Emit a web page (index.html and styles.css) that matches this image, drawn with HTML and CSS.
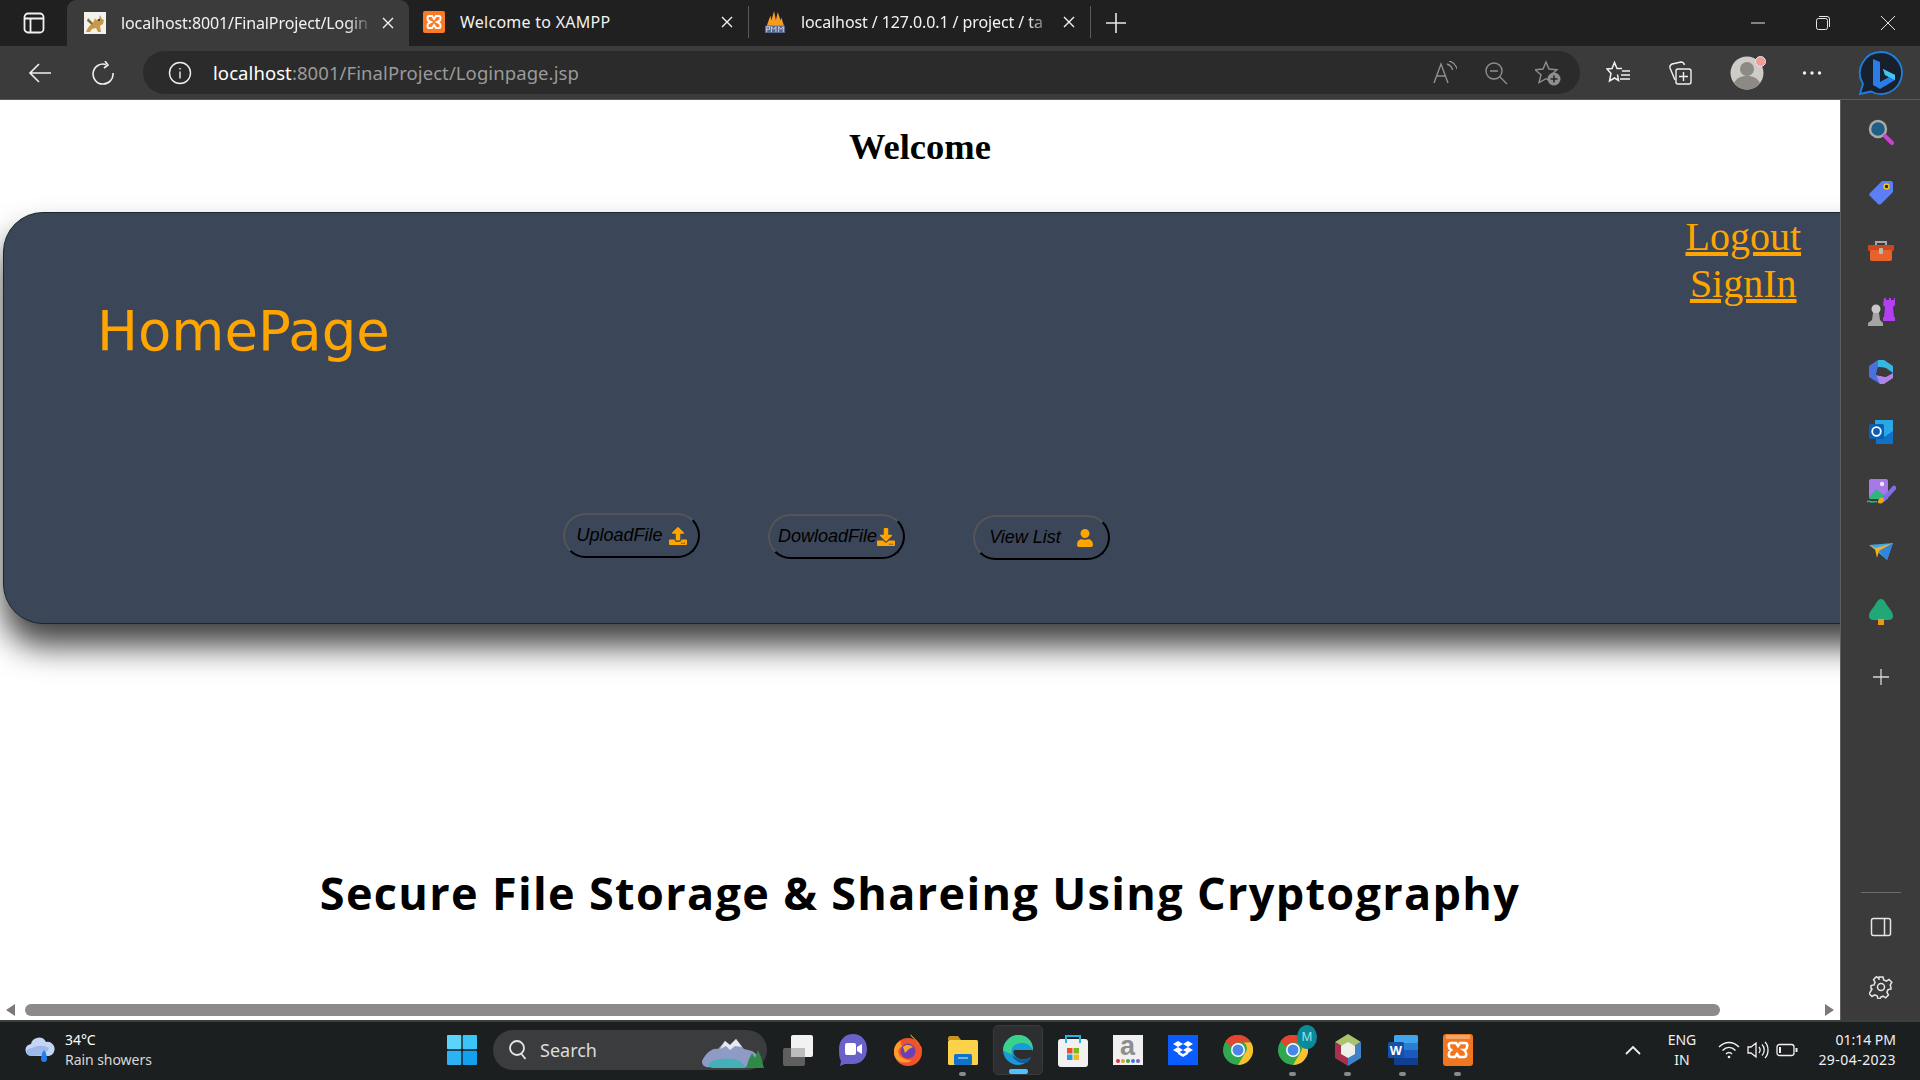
FILE: index.html
```html
<!DOCTYPE html>
<html lang="en">
<head>
<meta charset="utf-8">
<title>Loginpage</title>
<link rel="stylesheet" href="styles.css">
</head>
<body>
<div class="screen">
  <header class="tabstrip">
    <div class="tab-toggle">
      <svg width="24" height="24" viewBox="0 0 24 24" fill="none" stroke="#f2f2f2" stroke-width="1.8"><rect x="2.500" y="2.500" width="19" height="19" rx="3.500"/><path d="M2.500 7.500h19M8.500 7.500v14"/></svg>
    </div>
    <div class="tab tab-active">
      <svg class="favicon" viewBox="0 0 22 22"><rect width="22" height="22" fill="#f4f2ec"/><path d="M2 20c2-5 4-7 7-9l2-5 1 2 3-1 1-4 2 4 2 1-1 4-3 2 1 6h-3l-2-4-4 1-2 3z" fill="#c9994a"/><path d="M4 6l5 5-1 2-5-4z" fill="#8a6a30"/><circle cx="15" cy="8" r="1" fill="#222"/></svg>
      <span class="tab-title tab-title-tight">localhost:8001/FinalProject/Login</span>
      <svg class="tab-close" viewBox="0 0 14 14" stroke="#f2f2f2" stroke-width="1.4"><path d="M2 2l10 10M12 2L2 12"/></svg>
    </div>
    <div class="tab tab-xampp">
      <svg class="favicon" viewBox="0 0 22 22"><rect width="22" height="22" rx="2" fill="#fb7a24"/><path d="M6 5h3l2 3 2-3h3c2 0 2 4 0 5l-2 1 2 1c2 1 2 5 0 5h-3l-2-3-2 3H6c-2 0-2-4 0-5l2-1-2-1C4 9 4 5 6 5z" fill="none" stroke="#fff" stroke-width="2"/></svg>
      <span class="tab-title">Welcome to XAMPP</span>
      <svg class="tab-close" viewBox="0 0 14 14" stroke="#f2f2f2" stroke-width="1.4"><path d="M2 2l10 10M12 2L2 12"/></svg>
    </div>
    <div class="tab tab-pma">
      <svg class="favicon" viewBox="0 0 22 24"><path d="M2 16L6 5l1 5 3-10 2 10 2-9 3 9 1-3 3 10z" fill="#f59a23"/><rect x="0" y="16" width="22" height="8" fill="#56668f"/><path d="M2 23v-6h3v3H2M7 23v-6l2.500 3 2.500-3v6M15 23v-6l2.500 3 2.500-3v6" fill="none" stroke="#cfd5e6" stroke-width="1"/></svg>
      <span class="tab-title tab-title-tight">localhost / 127.0.0.1 / project / ta</span>
      <svg class="tab-close" viewBox="0 0 14 14" stroke="#f2f2f2" stroke-width="1.4"><path d="M2 2l10 10M12 2L2 12"/></svg>
    </div>
    <svg class="new-tab" width="22" height="22" viewBox="0 0 22 22" stroke="#e6e6e6" stroke-width="1.6"><path d="M11 1v20M1 11h20"/></svg>
    <div class="window-controls">
      <svg width="16" height="16" viewBox="0 0 16 16" stroke="#e6e6e6" stroke-width="1"><path d="M1 8h14"/></svg>
      <svg width="16" height="16" viewBox="0 0 16 16" fill="none" stroke="#e6e6e6" stroke-width="1"><rect x="1.500" y="3.500" width="11" height="11" rx="2"/><path d="M4 1.500h8a2.500 2.500 0 0 1 2.500 2.500v8"/></svg>
      <svg width="16" height="16" viewBox="0 0 16 16" stroke="#e6e6e6" stroke-width="1"><path d="M1 1l14 14M15 1L1 15"/></svg>
    </div>
  </header>

  <nav class="toolbar">
    <svg class="tool-back" width="24" height="24" viewBox="0 0 24 24" fill="none" stroke="#f0f0f0" stroke-width="1.6"><path d="M23 12H2M11 3l-9 9 9 9"/></svg>
    <svg class="tool-reload" width="24" height="24" viewBox="0 0 24 24" fill="none" stroke="#f0f0f0" stroke-width="1.6"><path d="M15 3.500A10 10 0 1 0 22 12M14 0l3 4-4 3"/></svg>
    <div class="address">
      <svg class="addr-info" width="24" height="24" viewBox="0 0 24 24" fill="none" stroke="#f0f0f0" stroke-width="1.4"><circle cx="12" cy="12" r="10.500"/><path d="M12 10.500v7M12 7v1.500"/></svg>
      <span class="url"><span class="url-host">localhost</span>:8001/FinalProject/Loginpage.jsp</span>
      <div class="addr-actions">
        <svg width="24" height="24" viewBox="0 0 24 24" fill="none" stroke="#8f8f8f" stroke-width="1.4"><path d="M1 22L8 3l7 19M3.500 15h9M14 3c3 1 5 3 5.500 6M16 0c4 1 7 4 8 8"/></svg>
        <svg width="24" height="24" viewBox="0 0 24 24" fill="none" stroke="#8f8f8f" stroke-width="1.4"><circle cx="10" cy="10" r="8"/><path d="M6 10h8M16 16l7 7"/></svg>
        <svg width="26" height="26" viewBox="0 0 26 26" fill="none" stroke="#8f8f8f" stroke-width="1.4"><path d="M11 2l3 7 8 .7-6 5 2 8-7-4-7 4 2-8-6-5 8-.7z"/><circle cx="19" cy="19" r="6.500" fill="#8f8f8f" stroke="none"/><path d="M19 15.500v7M15.500 19h7" stroke="#2b2b2b" stroke-width="1.600"/></svg>
      </div>
    </div>
    <div class="tool-actions">
      <svg width="26" height="26" viewBox="0 0 26 26" fill="none" stroke="#f0f0f0" stroke-width="1.500"><path d="M16 8.500H11L8.500 2.500 6 8.500 1 9l4 4.500L3.500 21l5-3 4 2.500-1-6M16 11h8M15 15h9M14 19h10"/></svg>
      <svg width="26" height="26" viewBox="0 0 26 26" fill="none" stroke="#f0f0f0" stroke-width="1.4"><path d="M7 20L2 8c-.5-2 0-3 2-4l9-2c2 0 3 1 3.500 3"/><rect x="8" y="9" width="15" height="15" rx="2"/><path d="M15.500 12v9M11 16.500h9"/></svg>
      <div class="avatar">
        <svg width="34" height="34" viewBox="0 0 34 34"><circle cx="17" cy="17" r="16.500" fill="#cfccc8"/><circle cx="17" cy="13" r="7" fill="#8d8985"/><path d="M4 27c3-6 8-7 13-7s10 1 13 7c-3 4-8 6.500-13 6.500S7 31 4 27z" fill="#8d8985"/></svg>
        <span class="avatar-dot"></span>
      </div>
      <svg class="tool-more" width="20" height="6" viewBox="0 0 20 6" fill="#f0f0f0"><circle cx="2.500" cy="3" r="1.700"/><circle cx="10" cy="3" r="1.700"/><circle cx="17.500" cy="3" r="1.700"/></svg>
    </div>
    <svg class="bing" width="46" height="46" viewBox="0 0 46 46"><path d="M23 2a21 21 0 1 1-10 39.500L2 44l3-10A21 21 0 0 1 23 2z" fill="#17202c" stroke="#1f7fe0" stroke-width="1.800"/><path d="M15 9l7 3v20l9-5-4-2-2-6 12 6v5l-15 9-7-4z" fill="#2a7de8"/><path d="M25 19l12 6v5l-10-5z" fill="#3ec8ee"/></svg>
  </nav>

  <div class="content">
    <main class="page">
      <h1 class="welcome">Welcome</h1>
      <section class="card">
        <div class="card-top">
          <h2 class="home-title">HomePage</h2>
          <div class="links">
            <a href="#logout">Logout</a>
            <a href="#signin">SignIn</a>
          </div>
        </div>
        <div class="actions">
          <button class="pill pill-upload" type="button">UploadFile
            <svg width="18" height="18" viewBox="0 0 512 512" fill="#ffa500"><path d="M296 384h-80c-13.300 0-24-10.700-24-24V192h-87.700c-17.800 0-26.700-21.500-14.100-34.100L242.300 5.700c7.500-7.500 19.800-7.500 27.300 0l152.200 152.200c12.600 12.600 3.700 34.100-14.100 34.100H320v168c0 13.300-10.700 24-24 24zm216-8v112c0 13.300-10.700 24-24 24H24c-13.300 0-24-10.700-24-24V376c0-13.300 10.700-24 24-24h136v8c0 30.900 25.100 56 56 56h80c30.900 0 56-25.100 56-56v-8h136c13.300 0 24 10.700 24 24zm-124 88c0-11-9-20-20-20s-20 9-20 20 9 20 20 20 20-9 20-20zm64 0c0-11-9-20-20-20s-20 9-20 20 9 20 20 20 20-9 20-20z"/></svg>
          </button>
          <button class="pill pill-download" type="button">DowloadFile
            <svg width="18" height="18" viewBox="0 0 512 512" fill="#ffa500"><path d="M216 0h80c13.300 0 24 10.700 24 24v168h87.700c17.800 0 26.700 21.500 14.100 34.100L269.700 378.300c-7.500 7.500-19.800 7.500-27.300 0L90.100 226.100c-12.600-12.600-3.700-34.100 14.100-34.100H192V24c0-13.300 10.700-24 24-24zm296 376v112c0 13.300-10.700 24-24 24H24c-13.300 0-24-10.700-24-24V376c0-13.300 10.700-24 24-24h146.700l49 49c20.100 20.100 52.500 20.100 72.600 0l49-49H488c13.300 0 24 10.700 24 24zm-124 88c0-11-9-20-20-20s-20 9-20 20 9 20 20 20 20-9 20-20zm64 0c0-11-9-20-20-20s-20 9-20 20 9 20 20 20 20-9 20-20z"/></svg>
          </button>
          <button class="pill pill-list" type="button">View List
            <svg width="18" height="18" viewBox="0 0 448 512" fill="#ffa500"><path d="M224 256c70.700 0 128-57.300 128-128S294.700 0 224 0 96 57.300 96 128s57.300 128 128 128zm89.600 32h-16.700c-22.200 10.200-46.900 16-72.900 16s-50.600-5.800-72.900-16h-16.700C60.200 288 0 348.200 0 422.400V464c0 26.500 21.500 48 48 48h352c26.500 0 48-21.500 48-48v-41.600c0-74.200-60.200-134.400-134.400-134.400z"/></svg>
          </button>
        </div>
      </section>
      <h2 class="project-title">Secure File Storage &amp; Shareing Using Cryptography</h2>
      <div class="hscroll">
        <span class="arrow-left"></span>
        <div class="hscroll-track"><div class="hscroll-thumb"></div></div>
        <span class="arrow-right"></span>
      </div>
    </main>

    <aside class="sidebar">
      <div class="side-item"><svg width="26" height="26" viewBox="0 0 26 26"><circle cx="10" cy="10" r="8" fill="#1f5f86" stroke="#a9a9a9" stroke-width="2.500"/><path d="M17 17l7 7" stroke="#d23fd6" stroke-width="4" stroke-linecap="round"/></svg></div>
      <div class="side-item"><svg width="26" height="26" viewBox="0 0 26 26"><path d="M14 2h9c1 0 2 1 2 2v9L13 25c-1 .7-2 .7-3 0L2 17c-1-1-1-2 0-3z" fill="#5b7ff5"/><circle cx="18.500" cy="7.500" r="2.500" fill="#1f2a44" stroke="#f5c518" stroke-width="1.500"/></svg></div>
      <div class="side-item"><svg width="28" height="26" viewBox="0 0 28 26"><path d="M9 7V3h10v4" fill="none" stroke="#a8a8a8" stroke-width="2"/><rect x="1" y="6" width="26" height="6" rx="1" fill="#c9481f"/><rect x="3" y="11" width="22" height="11" rx="2" fill="#e8622c"/><rect x="12" y="9" width="4" height="6" rx="1" fill="#b9b9b9"/></svg></div>
      <div class="side-item"><svg width="28" height="28" viewBox="0 0 28 28"><path d="M17 1h2v2h3V1h2v2h3V1h1v7l-2 2 1 10h1v4H16v-4h1l1-10-2-2z" fill="#b33ff0" transform="translate(0 -1)"/><circle cx="9" cy="11" r="4.500" fill="#c8c8c8"/><path d="M6 15h6l1 7 3 3v3H1v-3l4-3z" fill="#a4a4a4"/></svg></div>
      <div class="side-item"><svg width="26" height="26" viewBox="0 0 26 26"><path d="M10 1h6l9 6v7l-7-5-8-1z" fill="#38b6e0"/><path d="M1 7l9-6v7l-2 8 6 5-2 4-11-7z" fill="#4a6fe0"/><path d="M8 16l10 2 7-4v5l-9 6h-4z" fill="#b083e6"/><path d="M10 8l8 1v9l-10-2z" fill="#3b3b3b"/></svg></div>
      <div class="side-item"><svg width="26" height="26" viewBox="0 0 26 26"><rect x="7" y="1" width="18" height="18" rx="1" fill="#29a8e8"/><path d="M8 12l8 6 9-6v13H8z" fill="#0f72c6"/><rect x="1" y="5" width="15" height="15" rx="1.500" fill="#0a5fb4"/><circle cx="8.500" cy="12.500" r="4.300" fill="none" stroke="#fff" stroke-width="1.800"/></svg></div>
      <div class="side-item"><svg width="30" height="28" viewBox="0 0 30 28"><rect x="3" y="1" width="19" height="20" rx="2" fill="#a678e8"/><path d="M3 19l7-8 12 9v1H5z" fill="#2fb57e"/><circle cx="16" cy="6" r="2.200" fill="#f0e6ff"/><path d="M18 21L28 10" stroke="#7d6fe8" stroke-width="4.500" stroke-linecap="round"/><path d="M12 23c2-5 6-4 6-1s-3 4-6 3z" fill="#e8a91e"/><path d="M1 24c2-2 3 0 5 0s3-1 5 0" fill="none" stroke="#2fb57e" stroke-width="1.400"/></svg></div>
      <div class="side-item"><svg width="26" height="20" viewBox="0 0 26 20"><path d="M1 3L25 1 19 18l-8-7z" fill="#3da6ea"/><path d="M1 3l7 3 17-5-14 8-2 7-2-9z" fill="#f5b21e"/><path d="M11 9L25 1l-6 17z" fill="#2f86dc"/></svg></div>
      <div class="side-item"><svg width="26" height="28" viewBox="0 0 26 28"><path d="M13 1c3 0 4 3 6 6s6 7 6 11c0 3-2 4-5 4H6c-3 0-5-1-5-4 0-4 4-8 6-11s3-6 6-6z" fill="#22a777"/><rect x="10" y="21" width="6" height="6" fill="#e89a14"/></svg></div>
      <div class="side-item side-add"><svg width="18" height="18" viewBox="0 0 18 18" stroke="#d8d8d8" stroke-width="1.300"><path d="M9 1v16M1 9h16"/></svg></div>
      <div class="side-bottom">
        <div class="side-divider"></div>
        <div class="side-item"><svg width="22" height="20" viewBox="0 0 22 20" fill="none" stroke="#e6e6e6" stroke-width="1.500"><rect x="1.500" y="1.500" width="19" height="17" rx="2"/><path d="M14.500 2v16"/></svg></div>
        <div class="side-item"><svg width="24" height="24" viewBox="0 0 24 24" fill="none" stroke="#e6e6e6" stroke-width="1.500"><circle cx="12" cy="12" r="3.500"/><path d="M10 2h4l.7 3 2.600 1.100 2.700-1.600 2.800 2.800-1.600 2.700L22 12.600V14l-3 .7-1.100 2.600 1.600 2.700-2.800 2.800-2.700-1.600-2.600 1.100-.4 1.700h-2l-.7-3-2.600-1.100-2.700 1.600-2.800-2.800 1.600-2.700L3 14l-1-.4v-3l3-.7 1.100-2.600-1.600-2.700 2.800-2.800 2.700 1.600L10 5z"/></svg></div>
      </div>
    </aside>
  </div>

  <footer class="taskbar">
    <div class="weather">
      <svg width="32" height="32" viewBox="0 0 32 32"><path d="M8 22a6 6 0 0 1-1-12 8 8 0 0 1 15-2 7 7 0 0 1 3 14z" fill="#c4d6f5"/><path d="M8 14c6-3 12-3 17 0-2 5-6 8-17 8-3 0-5-1-6-4 1-2 3-4 6-4z" fill="#9db8ea"/><path d="M20 16c2 3 3 6 3 9a3 3 0 0 1-6 0c0-3 1-6 3-9z" fill="#1f7ff0"/></svg>
      <div class="weather-text"><span class="temp">34°C</span><span>Rain showers</span></div>
    </div>
    <svg class="start" width="30" height="30" viewBox="0 0 30 30"><rect width="14.300" height="14.300" rx="1" fill="#5cd3fb"/><rect x="15.700" width="14.300" height="14.300" rx="1" fill="#3cc3f8"/><rect y="15.700" width="14.300" height="14.300" rx="1" fill="#2db2f4"/><rect x="15.700" y="15.700" width="14.300" height="14.300" rx="1" fill="#15a0ee"/></svg>
    <div class="search">
      <svg width="20" height="22" viewBox="0 0 20 22" fill="none" stroke="#e6e6e6" stroke-width="1.800"><circle cx="9" cy="9" r="7"/><path d="M13.500 15l4 5"/></svg>
      <span class="search-label">Search</span>
      <svg class="search-art" width="66" height="36" viewBox="0 0 66 36"><path d="M2 28C6 20 12 15 18 16l7-8 5 4 6-6 8 10 8 2c8 4 8 12 4 16H12C5 35 2 33 2 28z" fill="#8f9bc4"/><path d="M25 8l5 4 6-6 6 8-7-1-5 4-4-4-6 3z" fill="#e8e8f2"/><path d="M8 31c8-6 22-7 32-3l6 7H14C10 35 8 33 8 31z" fill="#45b0b5"/><path d="M46 35l3-9 3-6 3 5 3-8 3 7 3 11z" fill="#2f8a48"/></svg>
    </div>
    <div class="task-icons">
      <div class="task-icon"><svg width="30" height="32" viewBox="0 0 30 32"><rect x="0" y="14" width="22" height="18" rx="2" fill="#5f5f5f"/><rect x="8" y="1" width="22" height="22" rx="2" fill="#f2f2f2"/><rect x="8" y="14" width="14" height="9" fill="#bdbdbd"/></svg></div>
      <div class="task-icon"><svg width="30" height="34" viewBox="0 0 30 34"><path d="M15 1c8 0 14 6 14 15s-6 15-14 15H7l-5 2 1-5C1 25 1 20 1 16 1 7 7 1 15 1z" fill="#6a61c9"/><rect x="7" y="10" width="11" height="12" rx="2" fill="#fff"/><path d="M19 14l5-3v10l-5-3z" fill="#fff"/></svg></div>
      <div class="task-icon"><svg width="30" height="34" viewBox="0 0 30 34"><circle cx="15" cy="19" r="14" fill="#f0532c"/><path d="M17 1c4 4 11 9 12 17 0-4-2-6-4-8-2-4-7-5-8-9z" fill="#ffbb2c"/><path d="M1 19C1 13 4 9 8 8c-1 3 0 4 2 5-5 2-6 6-3 10 3 3 8 5 12 4-5 5-18 3-18-8z" fill="#ff9a2c"/><circle cx="15" cy="18" r="7.500" fill="#6b3fb8"/><path d="M10 14c3-3 8-2 10 0l-4 2-4 4z" fill="#f6a62a"/></svg></div>
      <div class="task-icon task-open"><svg width="30" height="30" viewBox="0 0 30 30"><path d="M0 3c0-1 1-2 2-2h8l3 4h-13z" fill="#c9951a"/><rect y="5" width="30" height="25" rx="1.500" fill="#fbd24a"/><rect x="6" y="19" width="18" height="11" rx="1.500" fill="#1272c8"/><path d="M10 23h10" stroke="#7cc6f5" stroke-width="1.600"/></svg></div>
      <div class="task-icon task-active"><svg width="30" height="30" viewBox="0 0 30 30"><path d="M15 0c9 0 15 6 15 15H12c-3 0-2 7 5 9 4 1 8 0 11-2-3 5-8 8-13 8C7 30 0 23 0 15S7 0 15 0z" fill="#1a9ad6"/><path d="M0 15C1 6 8 0 15 0c9 0 15 6 15 15v2c0-5-5-9-11-9-8 0-12 5-10 11C4 18 1 16 0 15z" fill="#3bd18c"/><path d="M9 19c1 6 7 9 12 9 3 0 5-1 7-6-3 2-7 3-11 2-5-1-8-4-8-5z" fill="#0f5f9f"/></svg></div>
      <div class="task-icon"><svg width="30" height="34" viewBox="0 0 30 34"><rect x="0" y="6" width="30" height="28" rx="3" fill="#f1f1f1"/><path d="M8 10V3h14v7" fill="none" stroke="#25b4e8" stroke-width="2"/><rect x="9" y="15" width="5.500" height="5.500" fill="#e8502a"/><rect x="15.500" y="15" width="5.500" height="5.500" fill="#7fb81e"/><rect x="9" y="21.500" width="5.500" height="5.500" fill="#1f9ee8"/><rect x="15.500" y="21.500" width="5.500" height="5.500" fill="#f5b81e"/></svg></div>
      <div class="task-icon"><div class="amazon"><span class="amazon-a">a</span><svg width="26" height="6" viewBox="0 0 26 6"><circle cx="3" cy="3" r="2" fill="#d8323c"/><circle cx="8" cy="3" r="2" fill="#e8a01e"/><circle cx="13" cy="3" r="2" fill="#3aa655"/><circle cx="18" cy="3" r="2" fill="#3b78d8"/><circle cx="23" cy="3" r="2" fill="#8a5ac8"/></svg></div></div>
      <div class="task-icon"><svg width="30" height="30" viewBox="0 0 30 30"><rect width="30" height="30" fill="#0a5cff"/><path d="M10 6l5 3-5 3-5-3zM20 6l5 3-5 3-5-3zM10 12l5 3-5 3-5-3zM20 12l5 3-5 3-5-3zM15 19l5-3v3l-5 3-5-3v-3z" fill="#fff"/></svg></div>
      <div class="task-icon"><svg width="30" height="30" viewBox="0 0 30 30"><circle cx="15" cy="15" r="15" fill="#2fa84f"/><path d="M15 0a15 15 0 0 1 13 7.500H15a7.500 7.500 0 0 0-7 4.500L2.500 6A15 15 0 0 1 15 0z" fill="#e8432e"/><path d="M28 7.500A15 15 0 0 1 15 30l6.500-11A7.500 7.500 0 0 0 21 7.500z" fill="#fbc02d"/><circle cx="15" cy="15" r="7" fill="#fff"/><circle cx="15" cy="15" r="5.500" fill="#4a86e8"/></svg></div>
      <div class="task-icon task-open task-badged"><svg width="30" height="30" viewBox="0 0 30 30"><circle cx="15" cy="15" r="15" fill="#2fa84f"/><path d="M15 0a15 15 0 0 1 13 7.500H15a7.500 7.500 0 0 0-7 4.500L2.500 6A15 15 0 0 1 15 0z" fill="#e8432e"/><path d="M28 7.500A15 15 0 0 1 15 30l6.500-11A7.500 7.500 0 0 0 21 7.500z" fill="#fbc02d"/><circle cx="15" cy="15" r="7" fill="#fff"/><circle cx="15" cy="15" r="5.500" fill="#4a86e8"/></svg><span class="badge-m">M</span></div>
      <div class="task-icon task-open"><svg width="30" height="32" viewBox="0 0 30 32"><path d="M15 0l13 8-13 8L2 8z" fill="#a9c46c"/><path d="M2 8l13 8v16L2 24z" fill="#a8304f"/><path d="M28 8L15 16v16l13-8z" fill="#3f82c8"/><path d="M15 8l7 4v8l-7 4-7-4v-8z" fill="#eef0e8"/></svg></div>
      <div class="task-icon task-open"><svg width="30" height="30" viewBox="0 0 30 30"><rect x="6" y="0" width="24" height="30" rx="2" fill="#2b7cd3"/><rect x="6" y="0" width="24" height="8" rx="2" fill="#41a5ee"/><rect x="6" y="15" width="24" height="8" fill="#185abd"/><rect x="6" y="23" width="24" height="7" fill="#103f91"/><rect x="0" y="7" width="16" height="16" rx="1.500" fill="#1550a8"/><text class="word-w" x="8" y="20" text-anchor="middle">W</text></svg></div>
      <div class="task-icon task-open"><svg width="30" height="32" viewBox="0 0 30 32"><rect width="30" height="32" rx="3" fill="#f0761f"/><rect x="3" y="1" width="24" height="4" fill="#f7a566"/><path d="M8 9h5l2 3 2-3h5c3 0 3 5 0 7l-1 0c3 2 3 7 0 7h-5l-2-3-2 3H8c-3 0-3-5 0-7-3-2-3-7 0-7z" fill="none" stroke="#fff" stroke-width="2.600"/></svg></div>
    </div>
    <div class="tray">
      <svg class="tray-chevron" width="16" height="10" viewBox="0 0 16 10" fill="none" stroke="#f0f0f0" stroke-width="1.800"><path d="M1 9l7-7 7 7"/></svg>
      <div class="lang"><span>ENG</span><span>IN</span></div>
      <div class="tray-icons">
        <svg width="22" height="18" viewBox="0 0 22 18" fill="none" stroke="#f0f0f0" stroke-width="1.500"><path d="M1 6c6-6 14-6 20 0M4.500 9.500c4-4 9-4 13 0M8 13c2-2 4-2 6 0"/><circle cx="11" cy="16" r="1.300" fill="#f0f0f0" stroke="none"/></svg>
        <svg width="22" height="18" viewBox="0 0 22 18" fill="none" stroke="#f0f0f0" stroke-width="1.300"><path d="M1 6h3l5-4v14l-5-4H1zM12 6c1.500 2 1.500 4 0 6M15 3.500c3 3 3 8 0 11M18 1c4 4 4 12 0 16"/></svg>
        <svg width="22" height="14" viewBox="0 0 22 14" fill="none" stroke="#f0f0f0" stroke-width="1.300"><rect x="1" y="1.500" width="17" height="11" rx="2.500"/><path d="M20.500 5v4" stroke-width="2"/><path d="M4 4v6" stroke-width="2"/></svg>
      </div>
      <div class="clock"><span>01:14 PM</span><span class="clock-date">29-04-2023</span></div>
    </div>
  </footer>
</div>
</body>
</html>
```

FILE: styles.css
```css
* { box-sizing: border-box; }
html, body { margin: 0; height: 100%; overflow: hidden; }
body { font-family: "Noto Sans", "Open Sans", sans-serif; background: #000; }
svg { display: block; flex: none; }

.screen { width: 1920px; height: 1080px; display: flex; flex-direction: column; }

/* Tab strip */
.tabstrip { height: 46px; background: #202020; display: flex; align-items: stretch; color: #f2f2f2; flex: none; }
.tab-toggle { width: 67px; display: flex; align-items: center; padding-left: 22px; }
.tab { display: flex; align-items: center; font-size: 16px; position: relative; }
.tab-active { width: 342px; background: #3b3b3b; border-radius: 9px 9px 0 0; padding: 0 14px 0 17px; }
.tab-xampp { width: 340px; padding: 0 14px 0 14px; border-right: 1px solid #5a5a5a; margin: 6px 0 8px; }
.tab-pma { width: 342px; padding: 0 14px 0 15px; border-right: 1px solid #5a5a5a; margin: 6px 0 8px; }
.favicon { width: 22px; height: 22px; margin-right: 15px; }
.tab-title { flex: 1; min-width: 0; white-space: nowrap; overflow: hidden; letter-spacing: 0.26px;
  -webkit-mask-image: linear-gradient(to right, #000 calc(100% - 26px), transparent 100%);
  mask-image: linear-gradient(to right, #000 calc(100% - 26px), transparent 100%); }
.tab-title-tight { letter-spacing: -0.1px; }
.tab-xampp .tab-title { -webkit-mask-image: none; mask-image: none; }
.tab-close { width: 14px; height: 14px; margin-left: 8px; }
.new-tab { align-self: center; margin-left: 14px; }
.window-controls { margin-left: auto; display: flex; align-items: center; gap: 49px; padding-right: 24px; }

/* Toolbar */
.toolbar { height: 54px; background: #3b3b3b; border-bottom: 1px solid #5c5c5c; display: flex; align-items: center; flex: none; padding-left: 28px; }
.tool-reload { margin-left: 39px; }
.address { width: 1437px; height: 43px; margin-left: 28px; background: #2b2b2b; border-radius: 22px; display: flex; align-items: center; padding-left: 25px; flex: none; }
.addr-info { margin-right: 21px; }
.url { font-size: 18.500px; color: #9a9a9a; letter-spacing: 0.08px; white-space: nowrap; }
.url-host { color: #fff; }
.addr-actions { margin-left: auto; display: flex; align-items: center; gap: 27px; padding-right: 19px; }
.tool-actions { display: flex; align-items: center; width: 278px; padding-left: 26px; gap: 36px; flex: none; }
.tool-more { margin-left: 2px; }
.avatar { position: relative; }
.avatar-dot { position: absolute; right: -2px; top: 0; width: 11px; height: 11px; border-radius: 50%; background: #f59a9a; border: 1px solid #e8e8e8; }

/* Content */
.content { flex: 1; min-height: 0; display: flex; }
.page { width: 1840px; background: #fff; display: flex; flex-direction: column; overflow: hidden; }
.welcome { margin: 0; height: 112px; padding-top: 27px; font: bold 36.500px/40px "Liberation Serif", serif; text-align: center; color: #000; flex: none; }
.card { width: 1900px; height: 412px; margin-left: 3px; flex: none; background: #3b4658; border: 1px solid #16282c; border-radius: 40px; box-shadow: 0 22px 32px rgba(0, 0, 0, .75); }
.card-top { display: flex; justify-content: space-between; align-items: flex-start; height: 300px; }
.home-title { margin: 86px 0 0 93px; font: 400 54.500px/64px "DejaVu Sans", sans-serif; color: #ffa500; }
.links { display: flex; flex-direction: column; align-items: center; margin-right: 101px; font: 40px/47px "Liberation Serif", serif; }
.links a { color: #ffa500; text-decoration: underline; }
.actions { display: flex; align-items: flex-start; padding-left: 559px; gap: 68px; }
.pill { width: 137px; height: 45px; display: flex; align-items: center; justify-content: center; padding: 0; background: transparent; border: 2px solid; border-color: #555 #000 #000 #555; border-radius: 25px; font: italic 18px "Liberation Sans", sans-serif; color: #000; }
.pill-upload { gap: 6px; }
.pill-download { margin-top: 1px; }
.pill-list { margin-top: 2px; gap: 15px; }
.project-title { margin: 241px 0 0; font: bold 45px/56px "Open Sans", sans-serif; letter-spacing: 1.33px; text-align: center; color: #000; flex: none; }
.hscroll { margin-top: auto; height: 16px; padding-bottom: 4px; display: flex; align-items: center; padding-left: 6px; padding-right: 6px; flex: none; }
.hscroll-track { flex: 1; margin: 0 10px; height: 12px; }
.hscroll-thumb { width: 1695px; height: 12px; border-radius: 6px; background: #8b8b8b; }
.arrow-left { width: 0; height: 0; border: 6px solid transparent; border-left: 0; border-right: 9px solid #7a7a7a; }
.arrow-right { width: 0; height: 0; border: 6px solid transparent; border-right: 0; border-left: 9px solid #7a7a7a; }

/* Edge sidebar */
.sidebar { width: 80px; background: #3b3b3b; border-left: 1px solid #5f5f5f; display: flex; flex-direction: column; padding-top: 2px; }
.side-item { height: 60px; display: flex; align-items: center; justify-content: center; flex: none; }
.side-add { margin-top: 5px; }
.side-bottom { margin-top: auto; padding-bottom: 3px; }
.side-divider { width: 40px; height: 1px; background: #6a6a6a; margin: 0 auto 4px; }

/* Taskbar */
.taskbar { height: 60px; flex: none; background: #1c1f20; border-top: 2px solid #3c3f40; padding-bottom: 2px; display: flex; align-items: center; color: #f0f0f0; font-size: 14px; position: relative; }
.weather { width: 447px; display: flex; align-items: center; padding-left: 24px; gap: 9px; }
.weather-text { display: flex; flex-direction: column; line-height: 20px; font-size: 14px; letter-spacing: -0.05px; color: #d8d8d8; }
.temp { color: #fff; }
.start { margin-right: 16px; }
.search { width: 274px; height: 40px; background: #3a3c3d; border-radius: 20px; display: flex; align-items: center; padding-left: 15px; gap: 12px; position: relative; flex: none; }
.search-label { font-size: 18px; color: #dcdcdc; }
.search-art { position: absolute; right: 1px; top: 3px; }
.task-icons { display: flex; margin-left: 3px; flex: none; }
.task-icon { width: 55px; height: 50px; display: flex; align-items: center; justify-content: center; position: relative; }
.task-open::after { content: ""; position: absolute; left: 24px; bottom: -1px; width: 7px; height: 4px; border-radius: 2px; background: #8a8a8a; }
.task-active { background: #2c2e2f; border: 1px solid #383a3b; border-radius: 5px; width: 50px; margin: 0 2.500px; }
.task-active::after { content: ""; position: absolute; left: 15px; bottom: 0; width: 19px; height: 5px; border-radius: 2px; background: #4cc2ff; }
.amazon { width: 30px; height: 30px; background: #f0f0f0; display: flex; flex-direction: column; align-items: center; }
.amazon-a { font: bold 27px/23px "Liberation Sans", sans-serif; color: #8e8e8e; }
.badge-m { position: absolute; right: 3px; top: 0; width: 20px; height: 24px; border-radius: 50%; background: #0d8a98; color: #9fe0e6; font: 12px/24px "Noto Sans", sans-serif; text-align: center; }
.word-w { font: bold 13px "Liberation Sans", sans-serif; fill: #fff; }
.tray { flex: 1; display: flex; align-items: center; padding-left: 140px; }
.tray-chevron { margin-right: 26px; }
.lang { display: flex; flex-direction: column; align-items: center; width: 30px; line-height: 20px; }
.tray-icons { display: flex; align-items: center; gap: 7px; margin-left: 21px; }
.clock { margin-left: auto; margin-right: 24px; display: flex; flex-direction: column; align-items: flex-end; line-height: 20px; }
.clock-date { letter-spacing: 0.45px; }
```
